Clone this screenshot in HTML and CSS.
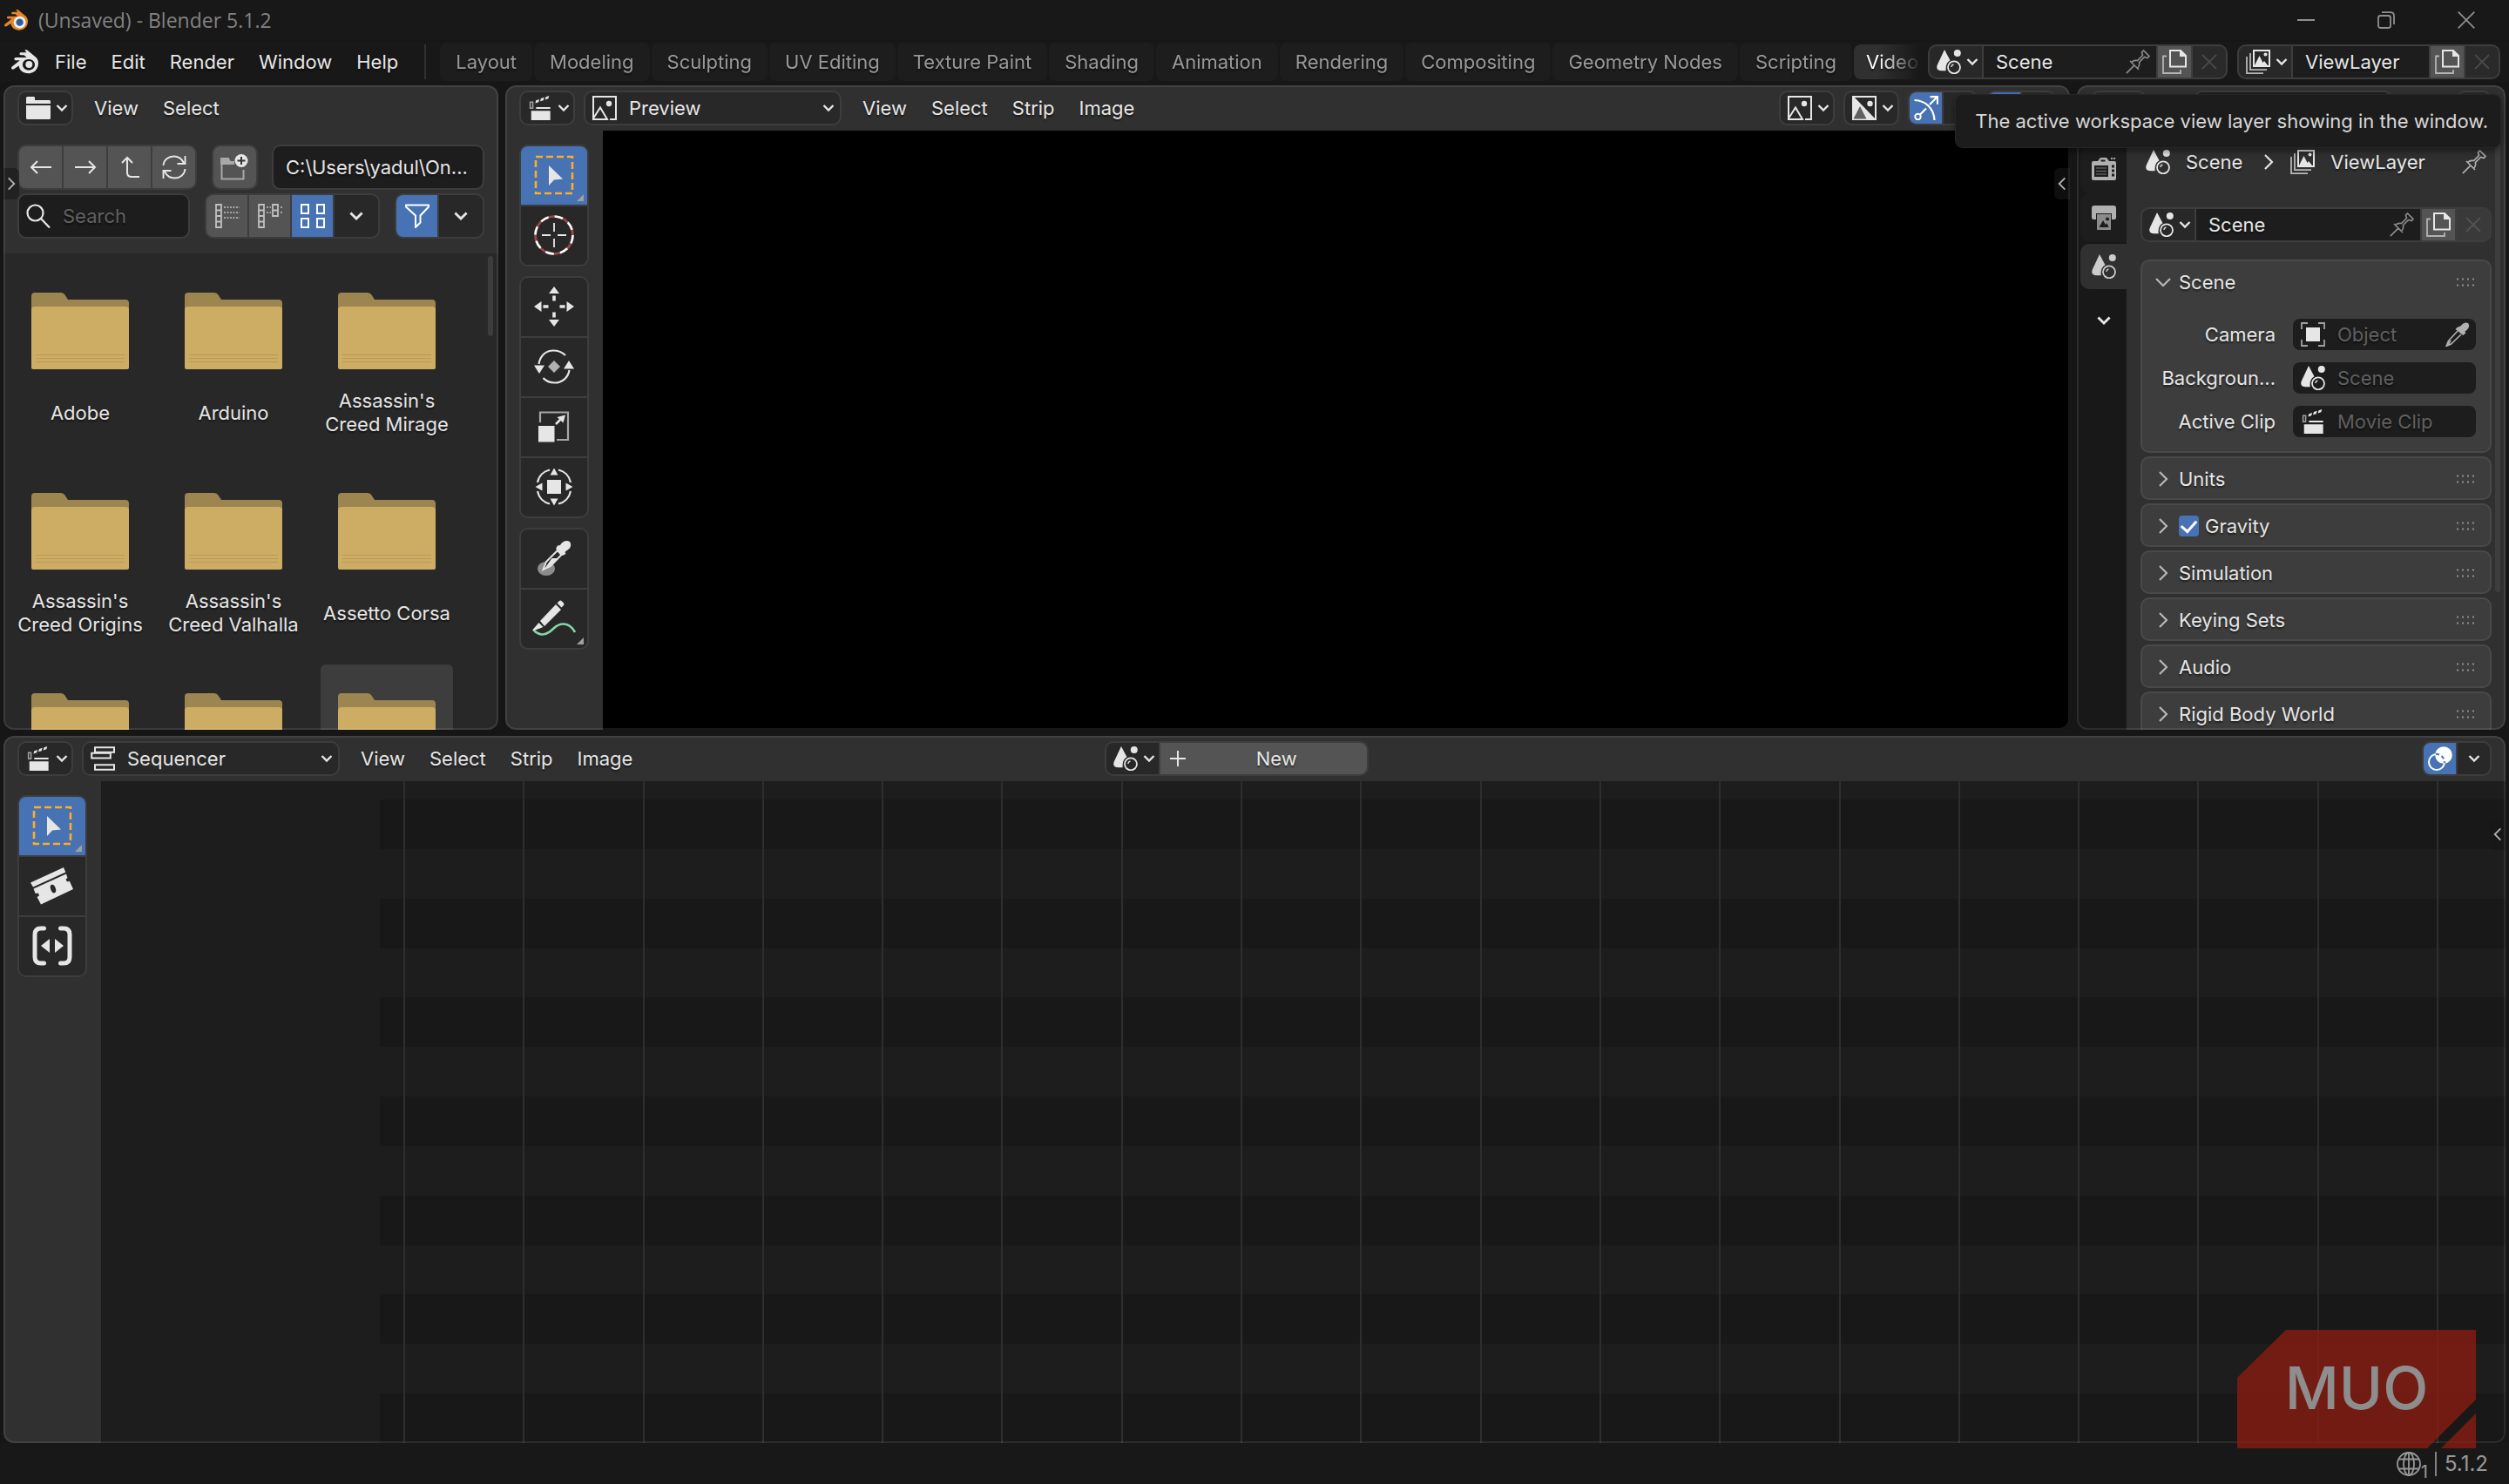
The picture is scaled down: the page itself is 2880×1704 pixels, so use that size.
FILE: index.html
```html
<!DOCTYPE html>
<html lang="en">
<head>
<meta charset="utf-8">
<title>(Unsaved) - Blender 5.1.2</title>
<link rel="stylesheet" href="styles.css">
</head>
<body>
<svg class="defs" aria-hidden="true">
  <symbol id="chev" viewBox="0 0 14 10"><path d="M1.5 2l5.5 5.5L12.5 2" fill="none" stroke="currentColor" stroke-width="2.4"/></symbol>
  <symbol id="chev-r" viewBox="0 0 12 20"><path d="M2 2l8 8-8 8" fill="none" stroke="currentColor" stroke-width="2.2"/></symbol>
  <symbol id="chev-d" viewBox="0 0 20 12"><path d="M2 2l8 8 8-8" fill="none" stroke="currentColor" stroke-width="2.2"/></symbol>
  <symbol id="blender" viewBox="0 0 32 28"><path fill="currentColor" fill-rule="evenodd" d="M16.5.8c.9-1 2.200-.8 3 0l10 8.200c3 3 3 8 1.500 11.500-2 4.500-6 6.800-10.500 6.800-6 0-10.500-4-10.800-8.800L4 22.300c-1.500 1.200-4-.6-2.500-2.500l9.300-7.600H6.200c-2.500 0-2.300-3.200 0-3.200h12.300l-3-2.800H12c-2 0-2-2.900 0-2.900h6.500zM21 11c-4.200 0-7 2.800-7 6.200s3 6.300 7 6.300 7-2.900 7-6.300S25 11 21 11z"/><circle cx="21.300" cy="17" r="4" fill="currentColor"/></symbol>
  <symbol id="scene" viewBox="0 0 28 28"><path fill="currentColor" d="M9 0L.8 17.500C-.8 22 1 24 6 24.300h4.700C10 18 12 14 15.500 12.200z"/><circle cx="23.800" cy="4" r="4" fill="currentColor"/><circle cx="20" cy="20.300" r="7" fill="none" stroke="currentColor" stroke-width="1.800"/><path d="M16.800 20a3.600 3.600 0 0 1 2.600-3" fill="none" stroke="currentColor" stroke-width="1.400"/></symbol>
  <symbol id="layers" viewBox="0 0 28 28"><path d="M9 1h18v18H9z" fill="none" stroke="currentColor" stroke-width="2"/><path d="M10 18l5.500-11 4 8 1.500-2 4 5z" fill="currentColor"/><circle cx="22.500" cy="5.500" r="2" fill="currentColor"/><path d="M5 4v19.200h19M1 8v19.200h19" fill="none" stroke="currentColor" stroke-width="1.800" opacity=".75"/></symbol>
  <symbol id="image" viewBox="0 0 28 28"><path d="M1 24V1h26v26h-7M1 24l-.5 3H17L9 13.500 1 26" fill="none" stroke="currentColor" stroke-width="2"/><circle cx="19" cy="9" r="3.200" fill="currentColor"/></symbol>
  <symbol id="image-alpha" viewBox="0 0 28 28"><path d="M1 1h26v26H1z" fill="none" stroke="currentColor" stroke-width="2"/><path d="M1 0l27 28H1z" fill="currentColor"/><path d="M9 12l7.500 14.500h-15z" fill="#606060"/><circle cx="20.500" cy="9" r="3.200" fill="currentColor"/></symbol>
  <symbol id="clapper" viewBox="0 0 28 30"><path d="M1.800 7.800h3.200v7.500H1.800z" fill="none" stroke="currentColor" stroke-width="1.600" opacity=".65"/><path d="M9 5.500l4-1.300-1 3.500-4 1.300zM15 3.300l4-1.300-1 3.500-4 1.300zM21 1.300L25 0l-1 3.500-4 1.300zM9 14h17.500v2H9zM3 18.500h23.500V30H3z" fill="currentColor"/></symbol>
  <symbol id="files" viewBox="0 0 28 26"><path d="M0 1.500Q0 0 1.500 0H9q1 0 1 1.500V4h16.500Q28 4 28 5.500V8H0zM0 10h28v14.500q0 1.500-1.500 1.500h-25Q0 26 0 24.500z" fill="currentColor"/></symbol>
  <symbol id="seq" viewBox="0 0 28 28"><path d="M5 1.200h22v5.600H5zM1.200 7.800h21.600v5.600H1.200zM5 21.200h22v5.600H5z" fill="none" stroke="currentColor" stroke-width="2"/></symbol>
  <symbol id="pin" viewBox="0 0 28 28"><path d="M.8 27.200l9.500-9.500M5 13l10 10M6.500 14.500c2-2 4.500-2.500 7-2l6-6-1-3.500L20.500 1 27 7.500 25 9.500l-3.500-1-6 6c.5 2.500 0 5-2 7" fill="none" stroke="currentColor" stroke-width="1.700"/></symbol>
  <symbol id="copy" viewBox="0 0 28 28"><path d="M9 1h12l6 6v12.500H9z" fill="none" stroke="currentColor" stroke-width="2"/><path d="M20 0l8 8h-8z" fill="currentColor"/><path d="M5 7.500H1V27h20v-4" fill="none" stroke="currentColor" stroke-width="1.800" opacity=".65"/></symbol>
  <symbol id="close" viewBox="0 0 20 20"><path d="M2 2l16 16M18 2L2 18" stroke="currentColor" stroke-width="1.800"/></symbol>
  <symbol id="dots" viewBox="0 0 22 10"><path d="M0 1.500h2m4 0h2m4 0h2m4 0h2M0 8.500h2m4 0h2m4 0h2m4 0h2" stroke="currentColor" stroke-width="2"/></symbol>
  <symbol id="overlay" viewBox="0 0 28 28"><circle cx="18" cy="10" r="9.800" fill="#fff"/><circle cx="10" cy="18" r="9" fill="none" stroke="#fff" stroke-width="2"/><path d="M9 9a9 9 0 0 1 9.800 10" fill="none" stroke="#4772b3" stroke-width="2.200" stroke-dasharray="4 3"/></symbol>
  <symbol id="gizmo" viewBox="0 0 28 28"><path d="M.5 5C13 5.500 23 14 23.500 28M18 10l9-9M18.500 1.200H27v8.500M7 21.500l7-7" fill="none" stroke="#fff" stroke-width="2.200"/><circle cx="4.500" cy="24" r="3.200" fill="#4772b3" stroke="#fff" stroke-width="2"/></symbol>
  <symbol id="dropper" viewBox="0 0 28 28"><path d="M18 4c2-3 5-4.500 8-3 2 2.500 1.500 5.500-2 8.500l-1.500 1 .8 2-3 2.500L11.500 8l2-2z" fill="currentColor"/><path d="M14 10L3.500 21.500 1 27.500 6.500 25 18 14M6 21l-3 5" fill="none" stroke="currentColor" stroke-width="1.600"/></symbol>
  <symbol id="box-select" viewBox="0 0 46 46"><rect x="2" y="2" width="42" height="42" fill="none" stroke="#ffad26" stroke-width="2.600" stroke-dasharray="8 4"/><path d="M17 12v23l6-6.500 10-1z" fill="#e6e6e6"/></symbol>
  <symbol id="folder" viewBox="0 0 112 88"><path d="M0 84V4q0-4 4-4h30q3 0 4.500 2.500L42 8h66q4 0 4 4v60H0z" fill="#9c854f"/><path d="M0 20q0-4 4-4h104q4 0 4 4v66q0 2-2 2H2q-2 0-2-2z" fill="#cdac63"/><path d="M5 71.500h102M5 75.500h102M5 79.500h102" stroke="#b99b59" stroke-width="1"/></symbol>
</svg>

<header class="titlebar">
  <svg class="app-icon" viewBox="0 0 32 28"><g color="#e8842a"><use href="#blender"/></g><circle cx="21.300" cy="17" r="8" fill="#f0f0f0"/><circle cx="21.300" cy="17" r="4.800" fill="#2b5f9c"/></svg>
  <h1>(Unsaved) - Blender 5.1.2</h1>
  <div class="winctl">
    <button aria-label="Minimize"><svg viewBox="0 0 20 20"><path d="M0 10h20" stroke="currentColor" stroke-width="2"/></svg></button>
    <button aria-label="Restore"><svg viewBox="0 0 20 20"><rect x="1" y="5" width="14" height="14" rx="2.500" fill="none" stroke="currentColor" stroke-width="1.800"/><path d="M5 1.200h10q4 0 4 4V15" fill="none" stroke="currentColor" stroke-width="1.800"/></svg></button>
    <button aria-label="Close"><svg viewBox="0 0 20 20"><path d="M.7.7l18.600 18.600M19.300.7L.7 19.300" stroke="currentColor" stroke-width="1.700"/></svg></button>
  </div>
</header>

<div class="topbar">
  <nav class="menus main-menu">
    <button class="logo" aria-label="Blender"><svg viewBox="0 0 32 28"><use href="#blender"/></svg></button>
    <button>File</button><button>Edit</button><button>Render</button><button>Window</button><button>Help</button>
  </nav>
  <div class="tabs" role="tablist">
    <button role="tab">Layout</button><button role="tab">Modeling</button><button role="tab">Sculpting</button><button role="tab">UV Editing</button><button role="tab">Texture Paint</button><button role="tab">Shading</button><button role="tab">Animation</button><button role="tab">Rendering</button><button role="tab">Compositing</button><button role="tab">Geometry Nodes</button><button role="tab">Scripting</button><button role="tab" class="active" aria-selected="true">Video</button>
  </div>
  <div class="group idsel top-scene">
    <button class="drop" aria-label="Browse scene"><svg class="i28"><use href="#scene"/></svg><svg class="chev"><use href="#chev"/></svg></button>
    <label class="name"><input value="Scene" aria-label="Scene name"><svg class="i28 dim"><use href="#pin"/></svg></label>
    <button class="sq" aria-label="New scene"><svg class="i28"><use href="#copy"/></svg></button>
    <button class="off" aria-label="Delete scene"><svg class="i20"><use href="#close"/></svg></button>
  </div>
  <div class="group idsel top-layer">
    <button class="drop" aria-label="Browse view layer"><svg class="i28"><use href="#layers"/></svg><svg class="chev"><use href="#chev"/></svg></button>
    <label class="name"><input value="ViewLayer" aria-label="View layer name"></label>
    <button class="sq" aria-label="New view layer"><svg class="i28"><use href="#copy"/></svg></button>
    <button class="off" aria-label="Remove view layer"><svg class="i20"><use href="#close"/></svg></button>
  </div>
</div>

<main class="workspace">
  <div class="upper">
    <section class="area browser">
      <div class="head">
        <button class="pick" aria-label="Editor type: File Browser"><svg class="i28"><use href="#files"/></svg><svg class="chev"><use href="#chev"/></svg></button>
        <nav class="menus"><button>View</button><button>Select</button></nav>
      </div>
      <div class="file-tools">
        <div class="row">
          <div class="group nav">
            <button aria-label="Back"><svg viewBox="0 0 28 28"><path d="M26 14H3M10 7l-7 7 7 7" fill="none" stroke="currentColor" stroke-width="2"/></svg></button>
            <button aria-label="Forward"><svg viewBox="0 0 28 28"><path d="M2 14h23M18 7l7 7-7 7" fill="none" stroke="currentColor" stroke-width="2"/></svg></button>
            <button aria-label="Parent"><svg viewBox="0 0 28 28"><path d="M5 9l6-6 6 6M11 3v17q0 5 5 5h9" fill="none" stroke="currentColor" stroke-width="2"/></svg></button>
            <button aria-label="Refresh"><svg viewBox="0 0 28 28"><path d="M1.500 12C2 5.500 7.500 1.500 13.500 1.500c5 0 9 2.500 11.500 7.500M26.500 1v9h-9M26.500 16c-.5 6.500-6 10.500-12 10.500-5 0-9-2.500-11.500-7.500M1.500 27v-9h9" fill="none" stroke="currentColor" stroke-width="1.900"/></svg></button>
          </div>
          <div class="group nav"><button aria-label="New directory"><svg class="i32" viewBox="0 0 32 30"><path d="M1.500 12v16.500h25V18M1 10V5h8l2 4h5" fill="none" stroke="#a8a8a8" stroke-width="2"/><path d="M0 4h9v3l2 2h5v3H0z" fill="#a8a8a8"/><circle cx="24" cy="7.500" r="7.500" fill="#e6e6e6"/><path d="M24 3v9M19.500 7.500h9" stroke="#333" stroke-width="2"/></svg></button></div>
          <input class="field path" value="C:\Users\yadul\On..." aria-label="Path">
        </div>
        <div class="row">
          <label class="field search"><svg class="i28" viewBox="0 0 28 28"><circle cx="10.500" cy="10.500" r="9" fill="none" stroke="currentColor" stroke-width="2.200"/><path d="M17 17l10 10.500" stroke="currentColor" stroke-width="2.200"/></svg><input placeholder="Search" aria-label="Search"></label>
          <div class="group modes">
            <button aria-label="Vertical list"><svg viewBox="0 0 28 28"><path d="M1 1h6v26H1zM1 7.500h6M1 14h6M1 20.500h6" fill="none" stroke="currentColor" stroke-width="1.800"/><path d="M10 4h18M10 10h18M10 16h18" stroke="currentColor" stroke-width="1.600" stroke-dasharray="2 1.500"/></svg></button>
            <button aria-label="Horizontal list"><svg viewBox="0 0 28 28"><path d="M1 1h6v26H1zM1 7.500h6M1 14h6M1 20.500h6M17 1h6v13h-6zM17 7.500h6" fill="none" stroke="currentColor" stroke-width="1.800"/><path d="M10 4h5M10 10h5M26 4h2M26 10h2" stroke="currentColor" stroke-width="1.600" stroke-dasharray="2 1.500"/></svg></button>
            <button class="on" aria-label="Thumbnails"><svg viewBox="0 0 28 28"><path d="M1 1h8v10H1zM19 1h8v10h-8zM1 17h8v10H1zM19 17h8v10h-8z" fill="none" stroke="currentColor" stroke-width="2"/></svg></button>
            <button class="more" aria-label="Display settings"><svg class="chev big"><use href="#chev"/></svg></button>
          </div>
          <div class="group modes">
            <button class="on" aria-label="Filter"><svg viewBox="0 0 28 28"><path d="M1 1.500h26v2l-9.500 10v8L12 27V13.500L1 3.500z" fill="none" stroke="currentColor" stroke-width="2"/></svg></button>
            <button class="more" aria-label="Filter settings"><svg class="chev big"><use href="#chev"/></svg></button>
          </div>
        </div>
      </div>
      <div class="files">
        <button><svg><use href="#folder"/></svg><span>Adobe</span></button>
        <button><svg><use href="#folder"/></svg><span>Arduino</span></button>
        <button><svg><use href="#folder"/></svg><span>Assassin's<br>Creed Mirage</span></button>
        <button><svg><use href="#folder"/></svg><span>Assassin's<br>Creed Origins</span></button>
        <button><svg><use href="#folder"/></svg><span>Assassin's<br>Creed Valhalla</span></button>
        <button><svg><use href="#folder"/></svg><span>Assetto Corsa</span></button>
        <button aria-label="Folder"><svg><use href="#folder"/></svg></button>
        <button aria-label="Folder"><svg><use href="#folder"/></svg></button>
        <button aria-label="Folder" class="hover"><svg><use href="#folder"/></svg></button>
        <i class="scroll"></i>
      </div>
      <button class="fold fold-l" aria-label="Show sidebar"><svg><use href="#chev-r"/></svg></button>
    </section>

    <section class="area preview">
      <div class="head">
        <button class="pick" aria-label="Editor type: Video Sequencer"><svg class="i28"><use href="#clapper"/></svg><svg class="chev"><use href="#chev"/></svg></button>
        <label class="choice"><svg class="i28"><use href="#image"/></svg><select aria-label="View type"><option>Preview</option></select><svg class="chev"><use href="#chev"/></svg></label>
        <nav class="menus"><button>View</button><button>Select</button><button>Strip</button><button>Image</button></nav>
        <div class="tail">
          <button class="pick" aria-label="Display mode"><svg class="i28"><use href="#image"/></svg><svg class="chev"><use href="#chev"/></svg></button>
          <button class="pick" aria-label="Display channels"><svg class="i28"><use href="#image-alpha"/></svg><svg class="chev"><use href="#chev"/></svg></button>
          <div class="group duo"><button class="on" aria-label="Gizmos"><svg class="i28"><use href="#gizmo"/></svg></button><button aria-label="Gizmo settings"><svg class="chev"><use href="#chev"/></svg></button></div>
          <div class="group duo"><button class="on" aria-label="Overlays"><svg class="i28"><use href="#overlay"/></svg></button><button aria-label="Overlay settings"><svg class="chev"><use href="#chev"/></svg></button></div>
        </div>
      </div>
      <div class="split">
        <div class="toolbar">
          <div class="tools">
            <button class="on corner" aria-label="Select box"><svg><use href="#box-select"/></svg></button>
            <button aria-label="Cursor"><svg viewBox="0 0 46 46"><circle cx="23" cy="23" r="21.500" fill="none" stroke="#a04a4a" stroke-width="2.600"/><circle cx="23" cy="23" r="21.500" fill="none" stroke="#fff" stroke-width="2.600" stroke-dasharray="9.650 7.240"/><path d="M23 9v10M23 27v10M9 23h10M27 23h10" stroke="#e6e6e6" stroke-width="1.800"/></svg></button>
          </div>
          <div class="tools">
            <button aria-label="Move"><svg viewBox="0 0 46 46"><path d="M23 0l6 8H17zM23 46l6-8H17zM0 23l8.500-6v12zM46 23l-8.500-6v12zM21.200 10.500h3.600v6h-3.600zM21.200 29.500h3.600v6h-3.600zM10.500 21.200h6v3.600h-6zM29.500 21.200h6v3.600h-6z" fill="currentColor"/></svg></button>
            <button aria-label="Rotate"><svg viewBox="0 0 46 46"><path d="M5.500 20C7 10 14 4.500 22 4.500c6 0 10 1.500 14 5.500M40.500 27C39 36 32 41.500 24 41.500c-6 0-10-1.500-13.500-5.500" fill="none" stroke="currentColor" stroke-width="2.200"/><path d="M0 21.500h12L6 31zM34 25.500h12L40 16z" fill="currentColor"/><path d="M23 16l7 7-7 7-7-7z" fill="#b0b0b0"/></svg></button>
            <button aria-label="Scale"><svg viewBox="0 0 46 46"><path d="M7 18V6.500h32V38H26" fill="none" stroke="#a8a8a8" stroke-width="2.200"/><path d="M5 22h18.500v18.500H5z" fill="currentColor"/><path d="M25 20l7-7" stroke="currentColor" stroke-width="2.500"/><path d="M36 9.500l-2.500 9-7-6.500z" fill="currentColor"/></svg></button>
            <button aria-label="Transform"><svg viewBox="0 0 46 46"><path d="M4 18C5.500 10.500 11 5 18 3.500M28 3.500C35 5 40.500 10.500 42 18M42 28c-1.500 7.500-7 13-14 14.500M18 42.500C11 41 5.500 35.500 4 28" fill="none" stroke="currentColor" stroke-width="2.200"/><path d="M15 15h16v16H15zM23 1.500l4.500 8h-9zM23 44.500l4.500-8h-9zM1.500 23l8-4.500v9zM44.500 23l-8-4.500v9z" fill="currentColor"/></svg></button>
          </div>
          <div class="tools">
            <button aria-label="Sample"><svg viewBox="0 0 46 46"><ellipse cx="14" cy="35" rx="10" ry="8" fill="#8c8c8c"/><path d="M30 8c2-4 7-6.500 11-4 2.500 4 1 8-4 10.500l-1.500 1.500 1 2-4 2L25 12l2-3.500z" fill="currentColor"/><path d="M27 14L14 27l-3.500 9L19 32l12.500-13z" fill="#282828" stroke="currentColor" stroke-width="2"/><path d="M12 35l8.500-12H27L19 31z" fill="currentColor"/></svg></button>
            <button class="corner" aria-label="Annotate"><svg class="wide" viewBox="0 0 50 46"><path d="M2 37c7 7 15 5 22-2s18-9 25 4" fill="none" stroke="#86d4a8" stroke-width="2.600"/><path d="M9 26L27 7l6 6-19 19zM28.500 5.500L31 3q1.500-1 3 .5l2 2q1 1.500 0 2.500l-2.500 2.500zM7.500 28l5 5L1 37.500q-1 0-.5-1.500z" fill="currentColor"/></svg></button>
          </div>
        </div>
        <div class="canvas"></div>
      </div>
      <button class="fold fold-r" aria-label="Show sidebar"><svg class="flip"><use href="#chev-r"/></svg></button>
    </section>

    <section class="area props">
      <div class="head">
        <button class="pick" aria-label="Editor type: Properties"></button>
        <input class="field prop-search" aria-label="Search properties">
        <button class="pick slim" aria-label="Options"></button>
      </div>
      <div class="split">
        <div class="ptabs">
          <button aria-label="Render"><svg viewBox="0 0 28 28"><path d="M0 7q0-2 2-2h5l3-4h7l3 4h6q2 0 2 2v18q0 2-2 2H2q-2 0-2-2zM22 1h2v2h-2zM25 1h2v2h-2z" fill="currentColor"/><path d="M3 10h16v13H3zM10.500 3.500h5v2h-5z" fill="#1d1d1d"/><path d="M5 13h12M5 16.500h12M5 20h12" stroke="currentColor" stroke-width="1.200" opacity=".6"/><path d="M23 11h3M23 16h3M23 21h3" stroke="#1d1d1d" stroke-width="3"/></svg></button>
          <button aria-label="Output"><svg viewBox="0 0 28 28"><path d="M0 3q0-3 3-3h22q3 0 3 3v11q0 2-2 2h-3V9H5v7H2q-2 0-2-2z" fill="currentColor"/><path d="M6 10h16v18H6z" fill="currentColor" opacity=".75"/><path d="M8.500 25l4.500-8 3 5 1.500-2 2 5z" fill="#1d1d1d"/><circle cx="18" cy="15.500" r="2" fill="#1d1d1d"/></svg></button>
          <button class="active" aria-label="Scene"><svg><use href="#scene"/></svg></button>
          <button class="more" aria-label="More tabs"><svg class="chev big"><use href="#chev"/></svg></button>
        </div>
        <div class="pbody">
          <div class="crumbs"><svg class="i28"><use href="#scene"/></svg><span>Scene</span><svg class="arrow"><use href="#chev-r"/></svg><svg class="i28"><use href="#layers"/></svg><span>ViewLayer</span><svg class="i28 pin"><use href="#pin"/></svg></div>
          <div class="group idsel">
            <button class="drop" aria-label="Browse scene"><svg class="i28"><use href="#scene"/></svg><svg class="chev"><use href="#chev"/></svg></button>
            <label class="name"><input value="Scene" aria-label="Scene name"><svg class="i28 dim"><use href="#pin"/></svg></label>
            <button class="sq" aria-label="New scene"><svg class="i28"><use href="#copy"/></svg></button>
            <button class="off" aria-label="Delete scene"><svg class="i20"><use href="#close"/></svg></button>
          </div>
          <div class="panels">
            <div class="panel">
              <button class="phead"><svg class="tri"><use href="#chev-d"/></svg><span>Scene</span><svg class="dots"><use href="#dots"/></svg></button>
              <div class="rows">
                <div class="prow"><label for="cam">Camera</label><div class="slot"><svg class="i28" viewBox="0 0 28 28"><path d="M6 6h16v16H6z" fill="currentColor"/><path d="M1 8V1h7M20 1h7v7M27 20v7h-7M8 27H1v-7" fill="none" stroke="currentColor" stroke-width="1.800" opacity=".65"/></svg><input id="cam" placeholder="Object"><svg class="i28 soft"><use href="#dropper"/></svg></div></div>
                <div class="prow"><label for="bg">Backgroun...</label><div class="slot"><svg class="i28"><use href="#scene"/></svg><input id="bg" placeholder="Scene"></div></div>
                <div class="prow"><label for="clip">Active Clip</label><div class="slot"><svg class="i28"><use href="#clapper"/></svg><input id="clip" placeholder="Movie Clip"></div></div>
              </div>
            </div>
            <div class="panel"><button class="phead"><svg class="tri"><use href="#chev-r"/></svg><span>Units</span><svg class="dots"><use href="#dots"/></svg></button></div>
            <div class="panel"><div class="phead"><svg class="tri"><use href="#chev-r"/></svg><input type="checkbox" id="grav" checked><label for="grav">Gravity</label><svg class="dots"><use href="#dots"/></svg></div></div>
            <div class="panel"><button class="phead"><svg class="tri"><use href="#chev-r"/></svg><span>Simulation</span><svg class="dots"><use href="#dots"/></svg></button></div>
            <div class="panel"><button class="phead"><svg class="tri"><use href="#chev-r"/></svg><span>Keying Sets</span><svg class="dots"><use href="#dots"/></svg></button></div>
            <div class="panel"><button class="phead"><svg class="tri"><use href="#chev-r"/></svg><span>Audio</span><svg class="dots"><use href="#dots"/></svg></button></div>
            <div class="panel"><button class="phead"><svg class="tri"><use href="#chev-r"/></svg><span>Rigid Body World</span><svg class="dots"><use href="#dots"/></svg></button></div>
          </div>
          <i class="scroll"></i>
        </div>
      </div>
    </section>
  </div>

  <section class="area sequencer">
    <div class="head">
      <button class="pick" aria-label="Editor type: Video Sequencer"><svg class="i28"><use href="#clapper"/></svg><svg class="chev"><use href="#chev"/></svg></button>
      <label class="choice"><svg class="i28"><use href="#seq"/></svg><select aria-label="View type"><option>Sequencer</option></select><svg class="chev"><use href="#chev"/></svg></label>
      <nav class="menus"><button>View</button><button>Select</button><button>Strip</button><button>Image</button></nav>
      <div class="group new-scene">
        <button class="drop" aria-label="Browse scene"><svg class="i28"><use href="#scene"/></svg><svg class="chev"><use href="#chev"/></svg></button>
        <button class="new"><svg viewBox="0 0 20 20"><path d="M10 1v18M1 10h18" stroke="currentColor" stroke-width="2"/></svg><span>New</span></button>
      </div>
      <div class="tail"><div class="group duo"><button class="on" aria-label="Overlays"><svg class="i28"><use href="#overlay"/></svg></button><button aria-label="Overlay settings"><svg class="chev"><use href="#chev"/></svg></button></div></div>
    </div>
    <div class="split">
      <div class="toolbar">
        <div class="tools">
          <button class="on corner" aria-label="Select box"><svg><use href="#box-select"/></svg></button>
          <button aria-label="Blade"><svg class="wide" viewBox="0 0 50 46"><path d="M0 19.500L38 2l2.300 5.500L3 24.500z" fill="currentColor"/><path d="M3.500 26.500L41 9.500l1.500 4.500-2 1.500 1.500 3 2.800-.8L49 27 12 44.500 7.500 36l2.500-1.500-1-3-3.300.5z" fill="currentColor"/><ellipse cx="26" cy="26.500" rx="2.800" ry="5" fill="#282828" transform="rotate(-20 26 26.500)"/></svg></button>
          <button aria-label="Slip"><svg viewBox="0 0 46 46"><path d="M13.500 3H10q-7 0-7 7v26q0 7 7 7h3.500M32.500 3H36q7 0 7 7v26q0 7-7 7h-3.500" fill="none" stroke="currentColor" stroke-width="5" stroke-linecap="round"/><path d="M10 23l10-8v16zM36 23l-10-8v16z" fill="currentColor"/></svg></button>
        </div>
      </div>
      <div class="timeline">
        <div class="stripes"><i></i><i></i><i></i><i></i><i></i><i></i><i></i><i></i><i></i><i></i><i></i><i></i><i></i></div>
        <div class="ticks"><i></i><i></i><i></i><i></i><i></i><i></i><i></i><i></i><i></i><i></i><i></i><i></i><i></i><i></i><i></i><i></i><i></i></div>
      </div>
    </div>
    <button class="fold fold-r" aria-label="Show sidebar"><svg class="flip"><use href="#chev-r"/></svg></button>
  </section>
</main>

<footer class="status"><svg class="i28" viewBox="0 0 28 28"><g fill="none" stroke="currentColor" stroke-width="1.800"><circle cx="14" cy="14" r="13"/><ellipse cx="14" cy="14" rx="6" ry="13"/><path d="M14 1v26M2.500 8.500h23M2.500 19.500h23"/></g></svg><sub>1</sub><i></i><span>5.1.2</span></footer>

<div class="tooltip" role="tooltip">The active workspace view layer showing in the window.</div>
<div class="mark"><svg viewBox="0 0 274 136"><path d="M56 0h218v80l-56 56H0V55zM274 96v40h-40z" fill="#901c10"/></svg><b>MUO</b></div>
</body>
</html>
```
FILE: styles.css
```css
* { box-sizing: border-box; }
html, body { height: 100%; }
body {
  margin: 0; display: flex; flex-direction: column; overflow: hidden; position: relative;
  background: #161616; color: #e6e6e6;
  font: 22px/28px Inter, "Liberation Sans", sans-serif;
}
button, input, select { font: inherit; color: inherit; background: none; border: 0; padding: 0; margin: 0; outline: 0; min-width: 0; }
input { width: 100%; text-overflow: clip; }
button, .area, .topbar, input { text-shadow: 0 2px 2px rgba(0, 0, 0, .5); }
svg { display: block; flex: none; }
.defs { position: absolute; width: 0; height: 0; }
.i28 { width: 28px; height: 28px; }
.i20 { width: 20px; height: 20px; }
.i32 { width: 32px; height: 30px; }
.chev { width: 14px; height: 10px; }
.chev.big { width: 18px; height: 12px; }
.dim { color: #8a8a8a; }
.soft { color: #b0b0b0; }

/* title bar */
.titlebar { height: 46px; flex: none; display: flex; align-items: center; background: #181818; color: #828282; padding: 0 3px 0 4px; margin-bottom: 2px; }
.titlebar h1 { margin: 0 0 0 12px; font: 23px/32px "Open Sans", "Noto Sans", sans-serif; flex: 1; }
.app-icon { width: 28px; height: 28px; }
.winctl { display: flex; }
.winctl button { width: 92px; height: 44px; display: flex; align-items: center; justify-content: center; color: #909090; }
.winctl svg { width: 20px; height: 20px; }

/* top bar */
.topbar { height: 46px; flex: none; display: flex; align-items: center; background: #181818; padding-right: 10px; }
.menus { display: flex; flex: none; }
.menus button { padding: 0 14px; height: 40px; }
.main-menu { padding-right: 16px; border-right: 2px solid #303030; }
.main-menu .logo { padding: 6px 5px 6px 12px; }
.logo svg { width: 32px; height: 28px; }
.tabs { display: flex; align-items: center; gap: 2px; flex: 1; min-width: 0; overflow: hidden; margin: 0 7px 0 16px; mask-image: linear-gradient(to right, #000 calc(100% - 50px), transparent); }
.tabs button { height: 44px; padding: 0 18px; background: #1d1d1d; color: #989898; border-radius: 8px; flex: none; }
.tabs .active { height: 40px; background: #303030; color: #fff; padding: 0 0 0 14px; flex: 1; text-align: left; border-radius: 8px 0 0 8px; }

/* joined controls */
.group { display: flex; flex: none; gap: 2px; background: #3d3d3d; border: 2px solid #3d3d3d; border-radius: 10px; overflow: hidden; }
.group button { display: flex; align-items: center; justify-content: center; background: #282828; }
.group .on { background: #4772b3; color: #fff; }
.group .drop { width: 60px; gap: 6px; padding-left: 8px; justify-content: flex-start; }
.idsel { height: 40px; }
.idsel .name { flex: 1; min-width: 0; display: flex; align-items: center; background: #1d1d1d; padding: 0 7px 0 14px; }
.idsel .sq { width: 38px; background: #545454; }
.idsel .off { width: 38px; background: #3a3a3a; color: #545454; }
.topbar .off { background: #2a2a2a; color: #4a4a4a; }
.top-scene { width: 344px; margin-right: 11px; }
.top-layer { width: 302px; }
.duo { width: 80px; height: 40px; }
.duo button { flex: 1; }

/* areas */
.workspace { flex: 1; min-height: 0; display: grid; grid-template-rows: minmax(0, 740fr) minmax(0, 812fr); gap: 7px; padding: 4px 4px 0; }
.upper { display: grid; grid-template-columns: 568px minmax(0, 1fr) 492px; gap: 8px; min-height: 0; }
.area { position: relative; display: flex; flex-direction: column; min-width: 0; min-height: 0; overflow: hidden; background: #303030; border-radius: 12px; }
.area::after { content: ""; position: absolute; inset: 0; border: 2px solid rgba(255, 255, 255, .09); border-radius: 12px; pointer-events: none; }
.head { height: 52px; flex: none; display: flex; align-items: center; gap: 10px; padding: 0 16px; }
.pick { width: 64px; height: 40px; flex: none; display: flex; align-items: center; gap: 6px; padding-left: 8px; background: #282828; border: 2px solid #3d3d3d; border-radius: 10px; }
.pick.slim { width: 40px; }
.choice { width: 296px; height: 40px; flex: none; display: flex; align-items: center; background: #282828; border: 2px solid #3d3d3d; border-radius: 10px; padding: 0 6px 0 8px; }
.choice select { appearance: none; flex: 1; margin-left: 14px; }
.tail { margin-left: auto; display: flex; gap: 10px; }
.split { flex: 1; min-height: 0; display: flex; }
.toolbar { width: 112px; flex: none; padding: 16px; display: flex; flex-direction: column; gap: 11px; }
.tools { width: 80px; display: flex; flex-direction: column; gap: 2px; background: #3d3d3d; border: 2px solid #3d3d3d; border-radius: 10px; overflow: hidden; flex: none; }
.tools button { height: 67px; display: flex; align-items: center; justify-content: center; background: #282828; position: relative; padding-bottom: 1px; }
.tools .on { background: #4772b3; }
.tools svg { width: 46px; height: 46px; }
.tools svg.wide { width: 50px; }
.corner::after { content: ""; position: absolute; right: 4px; bottom: 4px; border: 4px solid #a0a0a0; border-top-color: transparent; border-left-color: transparent; }
.canvas { flex: 1; background: #000; }
.fold { position: absolute; top: 95px; width: 18px; height: 36px; background: rgba(24, 24, 24, .6); color: #b0b0b0; display: flex; align-items: center; justify-content: center; }
.fold svg { width: 10px; height: 20px; }
.fold-l { left: 0; border-radius: 0 6px 6px 0; }
.fold-r { right: 0; border-radius: 6px 0 0 6px; }
.flip { transform: rotate(180deg); }
.scroll { position: absolute; right: 6px; width: 6px; border-radius: 3px; background: #3d3d3d; }

/* file browser */
.file-tools { flex: none; display: flex; flex-direction: column; gap: 4px; padding: 16px 16px 17px; }
.file-tools .row { display: flex; justify-content: space-between; }
.field { background: #1d1d1d; border: 2px solid #3d3d3d; border-radius: 10px; }
.nav button { width: 49px; height: 48px; background: #545454; }
.nav svg:not(.i32), .modes svg:not(.chev) { width: 28px; height: 28px; }
.path { width: 244px; padding-left: 14px; }
.search { width: 198px; height: 52px; display: flex; align-items: center; gap: 14px; padding: 0 8px; }
::placeholder { color: #606060; opacity: 1; }
.modes button { width: 47px; height: 48px; background: #545454; color: #c0c0c0; }
.modes .more { width: 50px; background: #282828; color: #e6e6e6; }
.files { flex: 1; min-height: 0; overflow: hidden; position: relative; background: #282828; display: grid; grid-template-columns: repeat(auto-fill, 176px); grid-auto-rows: 206px; gap: 24px 0; padding-top: 12px; justify-items: center; align-content: start; }
.files button { width: 152px; display: flex; flex-direction: column; align-items: center; justify-content: flex-start; gap: 23px; padding-top: 33px; border-radius: 6px; }
.files button svg { width: 112px; height: 88px; }
.files span { height: 54px; line-height: 27px; display: flex; align-items: center; white-space: nowrap; }
.files .hover { background: #3d3d3d; }
.files .scroll { top: 3px; height: 92px; }

/* properties */
.prop-search { width: 228px; height: 40px; margin-left: 44px; }
.props .slim { margin-left: auto; }
.ptabs { width: 57px; flex: none; background: #181818; padding: 16px 0 0 4px; display: flex; flex-direction: column; }
.ptabs button { height: 56px; background: #1d1d1d; color: #b0b0b0; border-radius: 10px 0 0 10px; display: flex; align-items: center; justify-content: center; }
.ptabs svg { width: 28px; height: 28px; }
.ptabs svg.chev { width: 18px; height: 12px; }
.ptabs .active { height: 52px; margin-top: 2px; background: #303030; color: #ccc; }
.ptabs .more { height: 72px; background: none; color: #e6e6e6; }
.pbody { flex: 1; min-width: 0; overflow: hidden; position: relative; padding: 0 16px; }
.pbody .scroll { top: 0; height: 530px; }
.crumbs { height: 72px; margin-bottom: 16px; padding: 0 6px; display: flex; align-items: center; }
.crumbs span { margin-left: 18px; }
.crumbs .arrow { width: 12px; height: 20px; margin: 0 19px 0 24px; }
.crumbs .pin { margin-left: auto; color: #b0b0b0; }
.panels { display: flex; flex-direction: column; gap: 4px; margin-top: 20px; }
.panel { background: #3d3d3d; border: 2px solid #494949; border-radius: 10px; }
.phead { width: 100%; height: 46px; display: flex; align-items: center; padding: 2px 16px 0 14px; text-align: left; }
.phead .tri { width: 20px; height: 20px; margin-right: 8px; color: #b8b8b8; }
.phead .dots { width: 22px; height: 10px; margin-left: auto; color: #909090; }
.phead input { appearance: none; width: 23px; height: 24px; flex: none; margin-right: 7px; border-radius: 4px; background: #4772b3; display: grid; place-items: center; }
.phead input::before { content: ""; width: 8px; height: 14px; border: solid #fff; border-width: 0 3px 3px 0; transform: translateY(-2px) rotate(42deg); }
.rows { display: flex; flex-direction: column; gap: 14px; padding: 20px 16px 16px; }
.prow { display: flex; align-items: center; gap: 20px; }
.prow > label { flex: 1; text-align: right; white-space: nowrap; }
.slot { width: 210px; height: 36px; flex: none; display: flex; align-items: center; gap: 14px; padding: 0 7px 0 9px; background: #1d1d1d; border-radius: 8px; }

/* sequencer */
.new-scene { position: absolute; left: 44%; width: 303px; height: 40px; }
.new-scene .new { flex: 1; background: #545454; padding: 0 0 0 10px; }
.new svg { width: 20px; height: 20px; }
.new span { flex: 1; text-align: center; }
.timeline { flex: 1; min-width: 0; background: #1d1d1d; display: grid; grid-template: minmax(0, 1fr) / minmax(0, 1fr); }
.stripes { grid-area: 1 / 1; margin: 21px 0 0 320px; display: flex; flex-direction: column; }
.stripes i { flex: 1; }
.stripes i:nth-child(odd) { background: #181818; }
.ticks { grid-area: 1 / 1; margin: 0 77px 0 347px; display: flex; border-right: 2px solid #2e2e2e; }
.ticks i { flex: 1; border-left: 2px solid #2e2e2e; }

/* status bar */
.status { height: 47px; flex: none; display: flex; align-items: center; justify-content: flex-end; padding-right: 24px; background: #181818; color: #989898; }
.status span { font-size: 24px; }
.status sub { font-size: 20px; line-height: 20px; align-self: flex-end; margin-bottom: 4px; }
.status > i { width: 2px; height: 28px; background: #828282; margin: 0 9px 0 8px; }

.tooltip { position: absolute; top: 109px; right: 10px; height: 60px; line-height: 60px; padding: 0 14px 0 22px; background: #1c1c1c; border-radius: 8px; box-shadow: 0 0 0 1px #262626, 0 4px 10px rgba(0, 0, 0, .5); color: #d8d8d8; white-space: nowrap; }
.mark { position: absolute; right: 38px; bottom: 41px; width: 274px; height: 136px; opacity: .75; display: grid; place-items: center; }
.mark svg, .mark b { grid-area: 1 / 1; }
.mark svg { width: 274px; height: 136px; }
.mark b { font: 500 68px/80px Inter, sans-serif; color: #b4b4b4; margin-bottom: 4px; }
```
